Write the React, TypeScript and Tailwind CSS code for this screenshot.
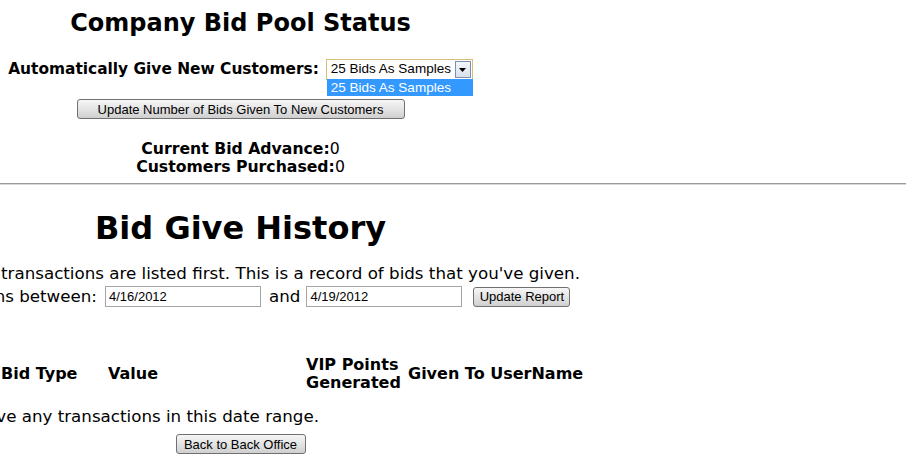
import { FC } from "react";

const btn =
  "h-[20px] px-0 whitespace-nowrap border border-[#707070] rounded-[3px] bg-gradient-to-b from-[#f6f6f6] via-[#e4e4e4] to-[#cfcfcf] font-['Liberation_Sans'] text-[13px] leading-none text-black";

const DateInput: FC<{ value: string }> = ({ value }) => (
  <div className="w-[156px] h-[21px] border border-[#a5a5a5] flex items-center px-[3px] font-['Liberation_Sans'] text-[13px] text-black">
    {value}
  </div>
);

export default function App() {
  return (
    <div className="w-[912px] h-[471px] overflow-hidden bg-white text-black font-['DejaVu_Sans',sans-serif]">
      {/* Bid pool status */}
      <div className="w-[481px] flex flex-col items-center pt-[9px]">
        <h2 className="text-[24px] leading-[28px] font-bold">Company Bid Pool Status</h2>

        <div className="mt-[21px] flex items-center gap-[7px]">
          <span className="text-[15.4px] font-bold whitespace-nowrap">Automatically Give New Customers:</span>
          <div className="relative">
            <div className="w-[147px] h-[21px] border border-[#d8bd74] flex items-center font-['Liberation_Sans'] text-[13.5px]">
              <span className="flex-1 pl-[4px] whitespace-nowrap">25 Bids As Samples</span>
              <span className="w-[16px] h-[17px] mr-[1px] border border-[#7b8fb0] bg-gradient-to-b from-[#f4f6fa] to-[#d9e1ee] flex items-center justify-center">
                <svg width="7" height="4" viewBox="0 0 7 4">
                  <path d="M0 0h7L3.5 4z" fill="#000" />
                </svg>
              </span>
            </div>
            <div className="absolute left-[1px] top-[20px] w-[146px] h-[17px] bg-[#3399ff] text-white font-['Liberation_Sans'] text-[13.5px] leading-[17px] pl-[4px] whitespace-nowrap">
              25 Bids As Samples
            </div>
          </div>
        </div>

        <button className={`mt-[18px] w-[328px] ${btn}`}>Update Number of Bids Given To New Customers</button>

        <div className="mt-[21px] text-[15.7px] leading-[18px] flex flex-col items-center">
          <div>
            <b>Current Bid Advance:</b>0
          </div>
          <div>
            <b>Customers Purchased:</b>0
          </div>
        </div>
      </div>

      <div className="mt-[7px] w-[906px] h-[2px] border-t border-[#9a9a9a] border-b border-b-[#d8d8d8]" />

      {/* Bid give history */}
      <div className="w-[481px] flex flex-col items-center mt-[24px]">
        <h1 className="text-[32px] leading-[38px] font-bold">Bid Give History</h1>
      </div>

      <div className="mt-[17px] w-[580px] flex justify-end text-[16.7px] leading-[19px]">
        <span className="shrink-0 whitespace-nowrap">
          Newest transactions are listed first. This is a record of bids that you've given.
        </span>
      </div>

      <div className="mt-[1px] flex items-center text-[16.7px]">
        <div className="w-[97px] flex justify-end">
          <span className="shrink-0 whitespace-nowrap">Show transactions between:</span>
        </div>
        <div className="ml-[8px]">
          <DateInput value="4/16/2012" />
        </div>
        <span className="ml-[8px] mr-[6px]">and</span>
        <DateInput value="4/19/2012" />
        <button className={`ml-[11px] w-[97px] ${btn}`}>Update Report</button>
      </div>

      <div className="mt-[47px] flex items-center text-[16px] leading-[18px] font-bold">
        <div className="w-[108px] flex justify-end">
          <div className="shrink-0 flex">
            <span className="w-[80px]">Date</span>
            <span className="w-[107px]">Bid Type</span>
          </div>
        </div>
        <span className="w-[198px]">Value</span>
        <span className="w-[102px]">
          VIP Points
          <br />
          Generated
        </span>
        <span className="whitespace-nowrap">Given To UserName</span>
      </div>

      <div className="mt-[15px] w-[319px] flex justify-end text-[16.7px] leading-[19px]">
        <span className="shrink-0 whitespace-nowrap">You don't have any transactions in this date range.</span>
      </div>

      <div className="w-[481px] flex justify-center mt-[8px]">
        <button className={`w-[130px] ${btn}`}>Back to Back Office</button>
      </div>
    </div>
  );
}
